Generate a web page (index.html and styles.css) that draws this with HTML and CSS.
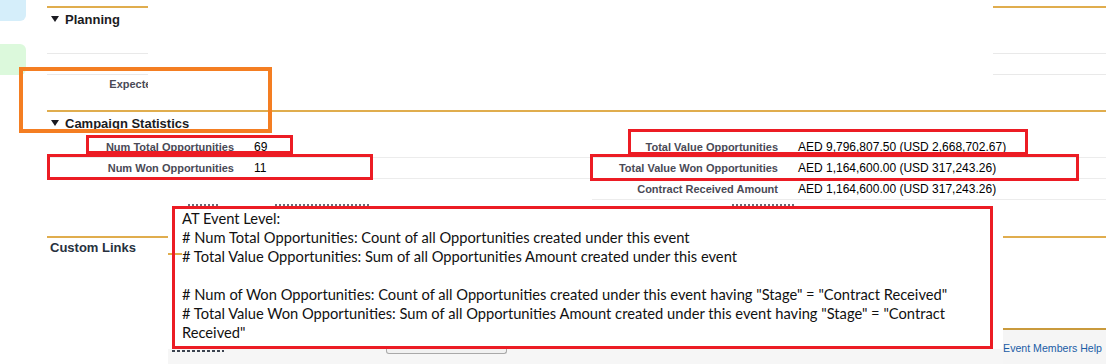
FILE: index.html
```html
<!DOCTYPE html>
<html lang="en">
<head>
<meta charset="utf-8">
<title>Campaign</title>
<link rel="stylesheet" href="styles.css">
</head>
<body>
<div class="page">
  <aside class="sidebar">
    <div class="tile tile-blue"></div>
    <div class="tile tile-green"></div>
  </aside>
  <main class="main">
    <section class="section planning">
      <h3 class="sec-head"><svg class="tri" width="8" height="6" viewBox="0 0 8 6"><path d="M0 0H8L4 6Z"/></svg>Planning</h3>
      <div class="plan-row row-a"></div>
      <div class="plan-row row-b"></div>
      <div class="plan-row row-c"><span class="label">Expected Response (%)</span><span class="value">0.00%</span></div>
    </section>
    <section class="section stats">
      <h3 class="sec-head"><svg class="tri" width="8" height="6" viewBox="0 0 8 6"><path d="M0 0H8L4 6Z"/></svg>Campaign Statistics</h3>
      <div class="grid">
        <div class="cell label r1">Num Total Opportunities</div>
        <div class="cell value r1">69</div>
        <div class="cell label r1">Total Value Opportunities</div>
        <div class="cell value r1">AED 9,796,807.50 (USD 2,668,702.67)</div>

        <div class="cell label">Num Won Opportunities</div>
        <div class="cell value">11</div>
        <div class="cell label">Total Value Won Opportunities</div>
        <div class="cell value">AED 1,164,600.00 (USD 317,243.26)</div>

        <div class="cell label nb"></div>
        <div class="cell value nb"></div>
        <div class="cell label">Contract Received Amount</div>
        <div class="cell value">AED 1,164,600.00 (USD 317,243.26)</div>
      </div>
    </section>
    <section class="section links">
      <h3 class="sec-head plain">Custom Links</h3>
    </section>
    <section class="related">
      <div class="related-pane"><a class="help" href="#">Event Members Help</a></div>
    </section>
  </main>
</div>

<div class="patch"></div>

<div class="paste">
  <div class="paste-top">
    <span class="dash dash-a"></span>
    <span class="dash dash-b"></span>
    <span class="dash dash-c"></span>
  </div>
  <div class="note">
    <p>AT Event Level:</p>
    <p># Num Total Opportunities: Count of all Opportunities created under this event</p>
    <p># Total Value Opportunities: Sum of all Opportunities Amount created under this event</p>
    <p class="blank">&nbsp;</p>
    <p># Num of Won Opportunities: Count of all Opportunities created under this event having "Stage" = "Contract Received"</p>
    <p># Total Value Won Opportunities: Sum of all Opportunities Amount created under this event having "Stage" = "Contract<br>Received"</p>
  </div>
  <div class="paste-bottom">
    <span class="dash dash-m"></span>
    <span class="btn-edge"></span>
  </div>
</div>

<div class="mark orange"></div>
<div class="mark red box-total"></div>
<div class="mark red box-won"></div>
<div class="mark red box-value"></div>
<div class="mark red box-wonvalue"></div>
</body>
</html>
```

FILE: styles.css
```css
* { box-sizing: border-box; }

html, body {
  margin: 0;
  padding: 0;
}

body {
  width: 1110px;
  height: 364px;
  overflow: hidden;
  position: relative;
  background: #fff;
  font-family: "Liberation Sans", Arial, sans-serif;
  color: #000;
}

.page {
  display: flex;
}

.sidebar {
  width: 47px;
  flex: none;
  display: flex;
  flex-direction: column;
}

.tile { width: 26px; }

.tile-blue {
  height: 21px;
  background: #d5eefa;
  border-radius: 0 0 6px 0;
}

.tile-green {
  height: 31px;
  margin-top: 23px;
  background: #dcf9dc;
  border-radius: 0 6px 6px 0;
}

.main {
  width: 1059px;
  flex: none;
}

.section {
  border-top: 2px solid #e0ad4e;
}

.planning { margin-top: 6px; }
.stats { margin-top: 17px; }
.links { margin-top: 36px; height: 92px; }

.sec-head {
  margin: 0;
  height: 22px;
  display: flex;
  align-items: center;
  gap: 6px;
  padding-left: 4px;
  font-size: 13px;
  font-weight: bold;
  color: #1b1b22;
}

.sec-head.plain {
  height: 18px;
  padding-left: 3px;
  color: #27313e;
}

.tri { fill: #1b1b22; flex: none; }

.plan-row {
  display: grid;
  grid-template-columns: 197px 1fr;
  align-items: center;
  border-bottom: 1px solid #e9e9e9;
}

.row-a { height: 24px; }
.row-b { height: 21px; }
.row-c { height: 18px; border-bottom: 0; }

.label {
  font-size: 11px;
  font-weight: bold;
  color: #4a4a56;
  text-align: right;
  padding-right: 10px;
  white-space: nowrap;
}

.value {
  font-size: 12px;
  color: #000;
  padding-left: 10px;
  white-space: nowrap;
}

.grid {
  display: grid;
  grid-template-columns: 197px 348px 196px 318px;
}

.cell {
  height: 21px;
  display: flex;
  align-items: center;
  border-bottom: 1px solid #ececec;
}

.cell.label { justify-content: flex-end; }

.cell.r1 {
  height: 24px;
  padding-top: 2px;
}

.cell.nb { border-bottom-color: transparent; }

.related {
  display: flex;
  justify-content: flex-end;
}

.related-pane {
  width: 113px;
  height: 36px;
  border-top: 2px solid #c99a3c;
  background: #f5f5f5;
  display: flex;
  justify-content: flex-end;
  padding: 11px 4px 0 0;
}

.help {
  font-size: 10.6px;
  line-height: 14px;
  color: #1a5ca6;
  text-decoration: none;
  white-space: nowrap;
}

/* white pasted patch over the planning section */
.patch {
  position: absolute;
  left: 148px;
  top: 0;
  width: 845px;
  height: 108px;
  background: #fff;
}

/* pasted note image */
.paste {
  position: absolute;
  left: 168px;
  top: 201px;
  width: 835px;
  height: 163px;
  background: #fff;
  display: flex;
  flex-direction: column;
}

.paste::before {
  content: "";
  position: absolute;
  left: 0;
  top: 52px;
  width: 14px;
  height: 2px;
  background: #e0ad4e;
  z-index: 0;
}

.paste-top {
  height: 5px;
  display: flex;
  align-items: flex-end;
}

.dash {
  height: 2px;
  background: repeating-linear-gradient(90deg, #6b6b76 0 2px, transparent 2px 4px);
}

.dash-a { margin-left: 20px; width: 32px; }
.dash-b { margin-left: 55px; width: 95px; }
.dash-c { margin-left: 362px; width: 62px; }

.note {
  position: relative;
  z-index: 1;
  margin-left: 4px;
  width: 821px;
  height: 143px;
  border: 3px solid #ec1c24;
  padding: 0 7px;
  font-family: Lato, "Open Sans", sans-serif;
  font-size: 14.7px;
  line-height: 19px;
  color: #111;
}

.note p { margin: 0; white-space: nowrap; }

.paste-bottom {
  height: 15px;
  background: #f6f6f6;
  display: flex;
  align-items: flex-start;
}

.dash-m {
  margin-left: 4px;
  margin-top: 1px;
  width: 52px;
  height: 2px;
  background: repeating-linear-gradient(90deg, #3b4350 0 3px, transparent 3px 5px);
}

.btn-edge {
  margin-left: 162px;
  width: 121px;
  height: 5px;
  border: 1px solid #a9a9a9;
  border-top: 0;
  border-radius: 0 0 3px 3px;
  background: #f1f1f1;
}

/* annotation marks */
.mark {
  position: absolute;
  background: transparent;
}

.orange {
  left: 19px;
  top: 67px;
  width: 253px;
  height: 66px;
  border: 4px solid #f47e22;
}

.red { border: 3px solid #ec1c24; }

.box-total { left: 86px; top: 135px; width: 207px; height: 19px; }
.box-won { left: 47px; top: 154px; width: 326px; height: 26px; }
.box-value { left: 628px; top: 129px; width: 400px; height: 26px; }
.box-wonvalue { left: 590px; top: 154px; width: 489px; height: 27px; }
```
